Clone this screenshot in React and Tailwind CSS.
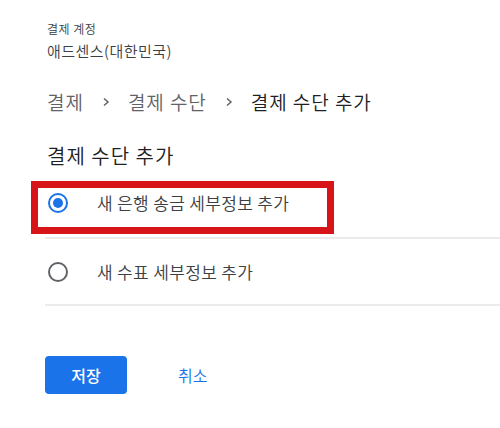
const font = { fontFamily: '"Noto Sans CJK KR", "Noto Sans", sans-serif' };

function Radio({ checked }) {
  return (
    <span
      className={
        "flex h-[20px] w-[20px] shrink-0 items-center justify-center rounded-full border-2 " +
        (checked ? "border-[#1a73e8]" : "border-[#5f6368]")
      }
    >
      {checked && <span className="h-[10px] w-[10px] rounded-full bg-[#1a73e8]" />}
    </span>
  );
}

function Chevron() {
  return (
    <svg width="10" height="12" viewBox="0 0 10 12" className="mx-[17px]">
      <path d="M3 2.5l4 3.5-4 3.5" fill="none" stroke="#5f6368" strokeWidth="1.5" />
    </svg>
  );
}

export default function App() {
  return (
    <div className="h-[428px] w-[500px] overflow-hidden bg-white pl-[45px] font-[350]" style={font}>
      {/* account */}
      <div className="pl-[2px] pt-[21px]">
        <div className="text-[12px] leading-[16px] tracking-[0.04em] text-[#3c4043]">결제 계정</div>
        <div className="mt-[3px] text-[15px] leading-[22px] tracking-[0.03em] text-[#3c4043]">애드센스(대한민국)</div>
      </div>

      {/* breadcrumb */}
      <div className="mt-[27px] flex items-center pl-[2px] text-[19px] leading-[26px] tracking-[0.05em]">
        <span className="text-[#5f6368]">결제</span>
        <Chevron />
        <span className="text-[#5f6368]">결제 수단</span>
        <Chevron />
        <span className="text-[#202124]">결제 수단 추가</span>
      </div>

      <h1 className="mt-[27px] pl-[2px] text-[20px] leading-[28px] tracking-[0.05em] text-[#202124]">결제 수단 추가</h1>

      {/* options */}
      <div className="mt-[-1px]">
        <div className="relative flex h-[70px] items-center border-b-2 border-[#ebebeb] pl-[3px]">
          <div className="pointer-events-none absolute left-[-14px] top-[12px] h-[53px] w-[303px] border-[7px] border-[#d71518]" />
          <Radio checked />
          <span className="ml-[29px] text-[17px] tracking-[0.02em] text-[#3c4043]">새 은행 송금 세부정보 추가</span>
        </div>
        <div className="flex h-[67px] items-center border-b-2 border-[#ebebeb] pl-[3px]">
          <Radio />
          <span className="ml-[29px] text-[17px] tracking-[0.02em] text-[#3c4043]">새 수표 세부정보 추가</span>
        </div>
      </div>

      {/* actions */}
      <div className="mt-[50px] flex items-center">
        <button className="h-[38px] w-[82px] rounded-[4px] bg-[#1a73e8] text-[16px] font-medium text-white">
          저장
        </button>
        <button className="ml-[51px] text-[16px] text-[#1a73e8]">취소</button>
      </div>
    </div>
  );
}
